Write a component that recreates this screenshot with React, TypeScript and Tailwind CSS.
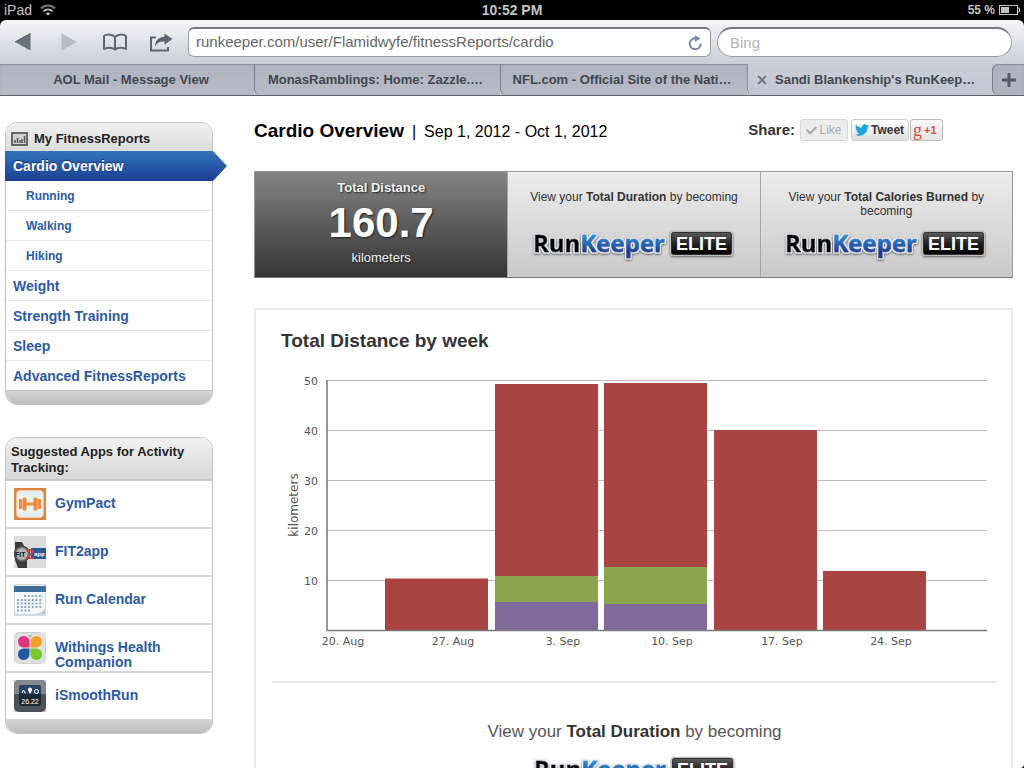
import { useId, type ReactNode } from "react";
import { FaCheck, FaTwitter } from "react-icons/fa";

type Week = { label: string; hiking: number; walking: number; running: number };

const weeks: Week[] = [
  { label: "27. Aug", hiking: 0, walking: 0, running: 10.3 },
  { label: "3. Sep", hiking: 5.6, walking: 5.2, running: 38.4 },
  { label: "10. Sep", hiking: 5.2, walking: 7.4, running: 36.8 },
  { label: "17. Sep", hiking: 0, walking: 0, running: 40 },
  { label: "24. Sep", hiking: 0, walking: 0, running: 11.8 },
];

const reports = [
  { name: "Running", sub: true },
  { name: "Walking", sub: true },
  { name: "Hiking", sub: true },
  { name: "Weight", sub: false },
  { name: "Strength Training", sub: false },
  { name: "Sleep", sub: false },
  { name: "Advanced FitnessReports", sub: false },
];

function StatusBar() {
  return (
    <div className="grid h-5 shrink-0 grid-cols-3 items-center bg-black px-1 text-sm leading-5 font-bold text-[#c4c4c4]">
      <div className="flex items-center gap-2">
        <span className="font-normal">iPad</span>
        <svg viewBox="0 0 16 12" className="h-3 w-4" fill="none" stroke="#b8b8b8" strokeWidth="2">
          <path d="M1 4.5C5 .6 11 .6 15 4.5" stroke="#777" />
          <path d="M3.6 7.2c2.6-2.4 6.200-2.400 8.800 0" />
          <path d="M5.800 9.400 8 11.600l2.200-2.200c-1.300-1.100-3.100-1.100-4.400 0z" fill="#c4c4c4" stroke="none" />
        </svg>
      </div>
      <div className="text-center">10:52 PM</div>
      <div className="flex items-center justify-end gap-1 text-xs">
        <span>55 %</span>
        <svg viewBox="0 0 21 10" className="h-[10px] w-[21px]">
          <rect x=".5" y=".5" width="18" height="9" fill="none" stroke="#c4c4c4" />
          <rect x="2" y="2" width="8" height="6" fill="#c4c4c4" />
          <path d="M19 3h1.500v4H19" fill="none" stroke="#c4c4c4" />
        </svg>
      </div>
    </div>
  );
}

function ToolButton({ label, children }: { label: string; children: ReactNode }) {
  return (
    <button aria-label={label} className="flex h-8 w-[46px] shrink-0 items-center justify-center">
      {children}
    </button>
  );
}

function Toolbar() {
  return (
    <div className="flex h-11 shrink-0 items-center rounded-t-md bg-linear-to-b from-[#f5f5f7] to-[#cbcdd7] pr-3">
      <ToolButton label="Back">
        <svg viewBox="0 0 16 18" className="h-[18px] w-4">
          <path d="M0 9 15.500.5v17z" fill="#6b7079" />
          <path d="M0 9 15.500.5" stroke="#4b5058" />
        </svg>
      </ToolButton>
      <ToolButton label="Forward">
        <svg viewBox="0 0 16 18" className="h-[18px] w-4">
          <path d="M16 9 .5.5v17z" fill="#b9bcc4" />
        </svg>
      </ToolButton>
      <ToolButton label="Bookmarks">
        <svg viewBox="0 0 26 18" className="h-[18px] w-[26px]" fill="none" stroke="#5f646d" strokeWidth="2" strokeLinejoin="round">
          <path d="M13 4C11 1.300 5 .8 2 3v13c3-2 9-1.700 11 .6 2-2.300 8-2.600 11-.6V3c-3-2.200-9-1.700-11 1z" />
          <path d="M13 4v12" />
        </svg>
      </ToolButton>
      <ToolButton label="Share page">
        <svg viewBox="0 0 24 19" className="h-[19px] w-6">
          <path d="M7 4.500H2v13h17v-3.500" fill="none" stroke="#5f646d" strokeWidth="2" />
          <path d="M15.500.5 23.500 6l-8 5.700V8.500c-5-.3-7.500 1.300-9.500 5C6 8 9 4 15.500 3.700z" fill="#5f646d" />
        </svg>
      </ToolButton>
      <div className="ml-1 flex h-[30px] flex-1 items-center rounded-md border border-t-2 border-[#9b9ea7] border-t-[#77797f] bg-white pr-2 pl-[7px]">
        <input
          aria-label="Address"
          defaultValue="runkeeper.com/user/Flamidwyfe/fitnessReports/cardio"
          className="min-w-0 flex-1 bg-transparent text-[15px] text-[#666] outline-none"
        />
        <button aria-label="Reload">
          <svg viewBox="0 0 14 16" className="h-4 w-[14px]">
            <path d="M12.700 8.500A5.500 5.500 0 1 1 8 3.400" fill="none" stroke="#7d889a" strokeWidth="2" />
            <path d="M7 .3 12.500 3.500 7 7z" fill="#7d889a" />
          </svg>
        </button>
      </div>
      <input
        aria-label="Search"
        placeholder="Bing"
        className="ml-[6px] h-[30px] w-[295px] rounded-full border border-t-2 border-[#9b9ea7] border-t-[#77797f] bg-white px-3 text-[15px] outline-none placeholder:text-[#b3b3b3]"
      />
    </div>
  );
}

function Tabs() {
  const idle =
    "truncate rounded-bl-md border-l border-[#7f828c] bg-linear-to-b from-[#b0b3bd] to-[#b8bbc5] pr-3 pl-2 text-center shadow-[inset_0_1px_1px_#8b8e98]";
  return (
    <div className="grid h-8 shrink-0 grid-cols-[254fr_246fr_247fr_245fr_32px] border-b border-[#5d5f66] bg-[#c5c7d1] text-[13px] leading-[31px] font-bold text-[#42464f] [text-shadow:0_1px_0_#d8dae2]">
      <button className="truncate bg-linear-to-b from-[#b0b3bd] to-[#b8bbc5] pl-2 text-center shadow-[inset_0_1px_1px_#8b8e98]">
        AOL Mail - Message View
      </button>
      <button className={idle}>MonasRamblings: Home: Zazzle.…</button>
      <button className={idle}>NFL.com - Official Site of the Nati…</button>
      <div className="flex items-center gap-2 overflow-hidden rounded-b-md border-l border-[#8b8e98] bg-linear-to-b from-[#cbcdd7] to-[#c3c5d0] pl-[9px]">
        <button aria-label="Close tab">
          <svg viewBox="0 0 10 10" className="size-[10px]" stroke="#777b85" strokeWidth="2">
            <path d="m1 1 8 8M9 1 1 9" />
          </svg>
        </button>
        <button className="truncate">Sandi Blankenship's RunKeep…</button>
      </div>
      <button
        aria-label="New tab"
        className="flex items-center justify-center rounded-bl-md rounded-tl-md border-l border-[#7f828c] bg-[#b0b3bd] shadow-[inset_0_1px_1px_#8b8e98]"
      >
        <svg viewBox="0 0 14 14" className="size-[14px]" stroke="#555962" strokeWidth="3">
          <path d="M7 0v14M0 7h14" />
        </svg>
      </button>
    </div>
  );
}

function ReportsNav() {
  return (
    <nav className="rounded-xl border border-[#c4c4c4] bg-white">
      <h2 className="flex h-7 items-center gap-[6px] rounded-t-xl bg-linear-to-b from-[#f0f0f0] to-[#dcdcdc] px-[5px] pt-1 text-[13px] font-bold text-[#222]">
        <svg viewBox="0 0 17 14" className="h-[14px] w-[17px]">
          <rect x="1" y="1" width="15" height="12" fill="#d2d2d2" stroke="#666" strokeWidth="2" />
          <path d="M4 11V8M6.500 11V6M9 11V8M11 11V7M13.500 11V4" stroke="#555" strokeWidth="1.500" />
        </svg>
        My FitnessReports
      </h2>
      <a
        href="#cardio"
        className="-mr-[15px] -ml-px flex h-[30px] items-center bg-linear-to-b from-[#3573ba] to-[#1b3f94] pl-2 text-sm font-bold text-white [clip-path:polygon(0_0,calc(100%-14px)_0,100%_50%,calc(100%-14px)_100%,0_100%)] [text-shadow:0_-1px_1px_#12306e]"
      >
        Cardio Overview
      </a>
      <ul>
        {reports.map((r) => (
          <li key={r.name} className="border-b border-[#e8e8e8] last:border-[#c4c4c4]">
            <a
              href="#report"
              className={
                r.sub
                  ? "flex h-[29px] items-center pl-5 text-xs font-bold text-[#2c5aa5]"
                  : "flex h-[29px] items-center pl-[7px] text-sm font-bold text-[#2c5aa5]"
              }
            >
              {r.name}
            </a>
          </li>
        ))}
      </ul>
      <div className="h-[13px] rounded-b-xl bg-linear-to-b from-[#d4d4d4] to-[#bcbcbc]" />
    </nav>
  );
}

function GymPactIcon() {
  return (
    <svg viewBox="0 0 32 32" className="size-8">
      <rect width="32" height="32" fill="#df8443" />
      <rect x="2.500" y="2.500" width="27" height="27" rx="4" fill="#e6f1f2" stroke="#f6c79c" />
      <g fill="#f08a3c">
        <rect x="12" y="14.500" width="8" height="3" />
        <rect x="8.500" y="9.500" width="4" height="13" rx="1.500" />
        <rect x="19.500" y="9.500" width="4" height="13" rx="1.500" />
        <rect x="5" y="11" width="3" height="10" rx="1" />
        <rect x="24" y="11" width="3" height="10" rx="1" />
      </g>
    </svg>
  );
}

function Fit2AppIcon() {
  return (
    <svg viewBox="0 0 32 32" className="size-8">
      <rect width="32" height="32" fill="#dcdcdc" />
      <path d="M1 6h7l5 10v16H4l-3-8z" fill="#3a3a3a" />
      <rect x="17" y="12" width="15" height="11" fill="#245a96" />
      <circle cx="8" cy="18" r="7.500" fill="#8d8d8d" stroke="#4c4c4c" strokeWidth="1.500" />
      <circle cx="8" cy="18" r="5.500" fill="#b5b5b5" />
      <g fontFamily="Liberation Sans" fontWeight="700">
        <text x="1" y="21" fontSize="7" fill="#111">FIT</text>
        <text x="12" y="23" fontSize="14" fill="#cf3b3b">2</text>
        <text x="20" y="20" fontSize="6" fill="#fff">app</text>
      </g>
    </svg>
  );
}

function CalendarIcon() {
  return (
    <svg viewBox="0 0 32 32" className="size-8">
      <rect width="32" height="32" fill="#d3dbe2" />
      <path d="M1 4a3 3 0 0 1 3-3h24a3 3 0 0 1 3 3v23l-3 3H4a3 3 0 0 1-3-3z" fill="#f5f8fa" />
      <path d="M0 2h32v6H0z" fill="#3e6d99" />
      <path
        d="M10 12h19M3 16h26M3 19.500h26M3 23h26M3 26.500h14"
        stroke="#8aa9c4"
        strokeWidth="2"
        strokeDasharray="2 1.700"
      />
      <path d="M20 30c5-.5 8-1 11-5v5z" fill="#b7c6d3" />
    </svg>
  );
}

function WithingsIcon() {
  return (
    <svg viewBox="0 0 32 32" className="size-8">
      <rect width="32" height="32" fill="#f0f0f0" />
      <rect x=".5" y=".5" width="31" height="31" rx="6" fill="#e0e0e0" stroke="#cfcfcf" />
      <circle cx="16" cy="4" r="1.500" fill="#aaa" />
      <path d="M15.500 15.500H10a5.800 5.800 0 1 1 5.500-5.500z" fill="#e0357c" />
      <path d="M16.500 15.500H22a5.800 5.800 0 1 0-5.500-5.500z" fill="#f4a12c" />
      <path d="M15.500 16.500H10a5.800 5.800 0 1 0 5.500 5.500z" fill="#2458a6" />
      <path d="M16.500 16.500H22a5.800 5.800 0 1 1-5.500 5.500z" fill="#7cc52b" />
    </svg>
  );
}

function SmoothRunIcon() {
  return (
    <svg viewBox="0 0 32 32" className="size-8">
      <rect width="32" height="32" fill="#c9c9c9" />
      <rect width="32" height="32" rx="5" fill="#4c5259" />
      <path d="M0 5a5 5 0 0 1 5-5h22a5 5 0 0 1 5 5v9H0z" fill="#83888d" />
      <rect x="5" y="5" width="22" height="21" rx="3" fill="#1c2a38" />
      <path d="M5 8a3 3 0 0 1 3-3h16a3 3 0 0 1 3 3v6H5z" fill="#2b4360" />
      <path d="m8 13 1.500-3 1.500 3h1" stroke="#fff" fill="none" />
      <path d="M16 14c-1-2-2-3-2-4.500a2 2 0 0 1 4 0c0 1.500-1 2.500-2 4.500z" fill="#fff" />
      <circle cx="22.500" cy="11.500" r="2" fill="none" stroke="#fff" />
      <text x="16" y="23.500" fontSize="7" fontWeight="400" fill="#fff" textAnchor="middle" fontFamily="Liberation Sans">
        26.22
      </text>
    </svg>
  );
}

const apps = [
  { name: "GymPact", icon: <GymPactIcon /> },
  { name: "FIT2app", icon: <Fit2AppIcon /> },
  { name: "Run Calendar", icon: <CalendarIcon /> },
  { name: "Withings Health Companion", icon: <WithingsIcon /> },
  { name: "iSmoothRun", icon: <SmoothRunIcon /> },
];

function SuggestedApps() {
  return (
    <section className="rounded-xl border border-[#c4c4c4] bg-white">
      <h2 className="rounded-t-xl border-b-2 border-[#c8c8c8] bg-linear-to-b from-[#f0f0f0] to-[#d8d8d8] px-[5px] pt-[6px] pb-[3px] text-[13px] leading-4 font-bold text-[#222]">
        Suggested Apps for Activity Tracking:
      </h2>
      <ul>
        {apps.map((app) => (
          <li key={app.name} className="border-b-2 border-[#d6d6d6] last:border-b">
            <a href="#app" className="flex h-[46px] gap-[9px] pr-2 pl-2 text-sm leading-[15px] font-bold text-[#2c5aa5]">
              <span className="mt-[7px] shrink-0">{app.icon}</span>
              <span className="mt-[15px]">{app.name}</span>
            </a>
          </li>
        ))}
      </ul>
      <div className="h-[13px] rounded-b-xl bg-linear-to-b from-[#d4d4d4] to-[#bcbcbc]" />
    </section>
  );
}

function EliteLogo() {
  const id = useId();
  return (
    <svg viewBox="0 0 206 36" className="h-9 w-[206px]" role="img" aria-label="RunKeeper Elite">
      <defs>
        <linearGradient id={`${id}b`} x1="0" y1="8" x2="0" y2="32" gradientUnits="userSpaceOnUse">
          <stop offset="0" stopColor="#2f95d8" />
          <stop offset=".75" stopColor="#1c3c94" />
        </linearGradient>
        <linearGradient id={`${id}k`} x1="0" y1="0" x2="0" y2="1">
          <stop offset="0" stopColor="#5a5a5a" />
          <stop offset=".5" stopColor="#222" />
          <stop offset="1" stopColor="#000" />
        </linearGradient>
        {/* light rim round the letters, with a soft shadow below it */}
        <filter id={`${id}r`} x="-5%" y="-20%" width="110%" height="150%">
          <feMorphology in="SourceAlpha" operator="dilate" radius="1" result="fat" />
          <feFlood floodColor="#e6eaf0" />
          <feComposite in2="fat" operator="in" result="rim" />
          <feDropShadow in="rim" dx="0" dy="1" stdDeviation="1.200" floodOpacity=".6" result="base" />
          <feMerge>
            <feMergeNode in="base" />
            <feMergeNode in="SourceGraphic" />
          </feMerge>
        </filter>
        <filter id={`${id}s`} x="-10%" y="-20%" width="120%" height="150%">
          <feDropShadow dx="0" dy="1" stdDeviation="1.200" floodOpacity=".55" />
        </filter>
      </defs>
      <text
        x="2"
        y="26"
        fontFamily="Open Sans"
        fontWeight="700"
        fontSize="24"
        stroke="#000"
        strokeWidth=".8"
        strokeLinejoin="round"
        filter={`url(#${id}r)`}
      >
        Run
        <tspan fill={`url(#${id}b)`} stroke={`url(#${id}b)`}>
          Keeper
        </tspan>
      </text>
      <rect x="139" y="5" width="63" height="25" rx="3" fill="#bdbdbd" filter={`url(#${id}s)`} />
      <rect x="140.500" y="6.500" width="60" height="22" rx="2" fill={`url(#${id}k)`} stroke="#333" />
      <text x="170.500" y="24" textAnchor="middle" fontFamily="Liberation Sans" fontWeight="700" fontSize="18" fill="#fff">
        ELITE
      </text>
    </svg>
  );
}

function SharePanel() {
  const box = "flex h-[22px] items-center rounded-[3px] border";
  return (
    <div className="mr-[70px] ml-auto flex items-center">
      <span className="text-[15px] font-bold text-[#333]">Share:</span>
      <button className={`${box} ml-[5px] w-12 justify-center gap-[2px] border-[#d5d5d5] bg-[#ececec] text-xs text-[#aaa]`}>
        <FaCheck className="size-[11px]" />
        Like
      </button>
      <button className={`${box} ml-[3px] w-[58px] gap-[2px] border-[#ccc] bg-linear-to-b from-white to-[#dedede] pl-[3px] text-xs font-bold text-[#333]`}>
        <FaTwitter className="size-[14px] shrink-0 text-[#1fa3dd]" />
        Tweet
      </button>
      <button className={`${box} ml-px w-[33px] border-[#bbb] bg-linear-to-b from-[#f8f8f8] to-[#e4e4e4] text-[11px] font-bold text-[#dd4b39]`}>
        <span className="w-[13px] font-['Liberation_Serif'] text-lg leading-4 font-normal">g</span>
        +1
      </button>
    </div>
  );
}

function Summary() {
  const locked =
    "flex flex-col items-center border-l border-[#a5a5a5] bg-linear-to-b from-[#ececec] to-[#c9c9c9] px-5 pt-[18px] text-center text-xs leading-[14px] text-[#333]";
  return (
    <div className="grid h-[107px] grid-cols-3 border border-[#999] border-b-[#777]">
      <div className="bg-linear-to-b from-[#858585] to-[#363636] pt-2 text-center text-[13px] leading-4 text-[#f0f0f0] [text-shadow:1px_1px_2px_#222]">
        <div className="font-bold">Total Distance</div>
        <div className="text-[42px] leading-[54px] font-bold text-white">160.7</div>
        <div>kilometers</div>
      </div>
      <div className={locked}>
        <p className="h-9">
          View your <b>Total Duration</b> by becoming
        </p>
        <EliteLogo />
      </div>
      <div className={locked}>
        <p className="h-9">
          View your <b>Total Calories Burned</b> by becoming
        </p>
        <EliteLogo />
      </div>
    </div>
  );
}

// 5 units of the drawing stand for one kilometer
const SCALE = 5;
const BASE = 260;

function DistanceChart() {
  return (
    <svg viewBox="1 0 755 282" className="block w-full" role="img" aria-label="Total Distance by week">
      <g fontFamily="DejaVu Sans, sans-serif" fontSize="11" fill="#555">
        {[10, 20, 30, 40, 50].map((km) => (
          <g key={km}>
            <line x1="72" x2="732" y1={BASE + 0.5 - km * SCALE} y2={BASE + 0.5 - km * SCALE} stroke="#bcbcbc" />
            <text x="63" y={BASE + 5 - km * SCALE} textAnchor="end">
              {km}
            </text>
          </g>
        ))}
        <text x="43" y="135" fontSize="12" textAnchor="middle" transform="rotate(-90 43 135)">
          kilometers
        </text>
        <text x="88" y="275" textAnchor="middle">
          20. Aug
        </text>
        {weeks.map((w, i) => {
          const x = Math.round(130 + i * 109.5);
          const hike = w.hiking * SCALE;
          const walk = w.walking * SCALE;
          const run = w.running * SCALE;
          return (
            <g key={w.label}>
              <rect x={x} y={BASE - hike - walk - run} width="103" height={run} fill="#a94442" />
              <rect x={x} y={BASE - hike - walk} width="103" height={walk} fill="#89a54e" />
              <rect x={x} y={BASE - hike} width="103" height={hike} fill="#80699b" />
              <text x={x + 68} y="275" textAnchor="middle">
                {w.label}
              </text>
            </g>
          );
        })}
      </g>
      <path d="M72 10v250.500h660" fill="none" stroke="#777" strokeWidth="1.500" />
    </svg>
  );
}

export default function App() {
  return (
    <div className="flex h-screen flex-col overflow-hidden bg-black font-['Liberation_Sans',Arial,sans-serif]">
      <StatusBar />
      <Toolbar />
      <Tabs />
      <div className="flex min-h-0 flex-1 items-start overflow-hidden rounded-br-sm bg-white pr-[11px] pl-[5px]">
        <aside className="flex w-52 shrink-0 flex-col gap-8 pt-[26px]">
          <ReportsNav />
          <SuggestedApps />
        </aside>
        <main className="ml-[41px] min-w-0 flex-1 pt-[23px]">
          <header className="mb-[30px] flex h-[22px] items-center">
            <h1 className="mt-[3px] flex items-baseline gap-2 text-black">
              <span className="text-[19px] font-bold">Cardio Overview</span>
              <span>|</span>
              <span>Sep 1, 2012 - Oct 1, 2012</span>
            </h1>
            <SharePanel />
          </header>
          <Summary />
          <section className="mt-[30px] border-2 border-[#e8e8e8] pb-8">
            <h2 className="pt-[19px] pb-[17px] pl-[25px] text-[19px] leading-6 font-bold text-[#333]">
              Total Distance by week
            </h2>
            <DistanceChart />
            <div className="mr-[14px] ml-4 mt-[29px] border-t-2 border-[#e4e4e4] pt-[37px] text-center text-[17px] leading-6 text-[#555]">
              <p>
                View your <b className="text-[#333]">Total Duration</b> by becoming
              </p>
              <div className="mt-2 flex justify-center">
                <EliteLogo />
              </div>
            </div>
          </section>
        </main>
      </div>
    </div>
  );
}
